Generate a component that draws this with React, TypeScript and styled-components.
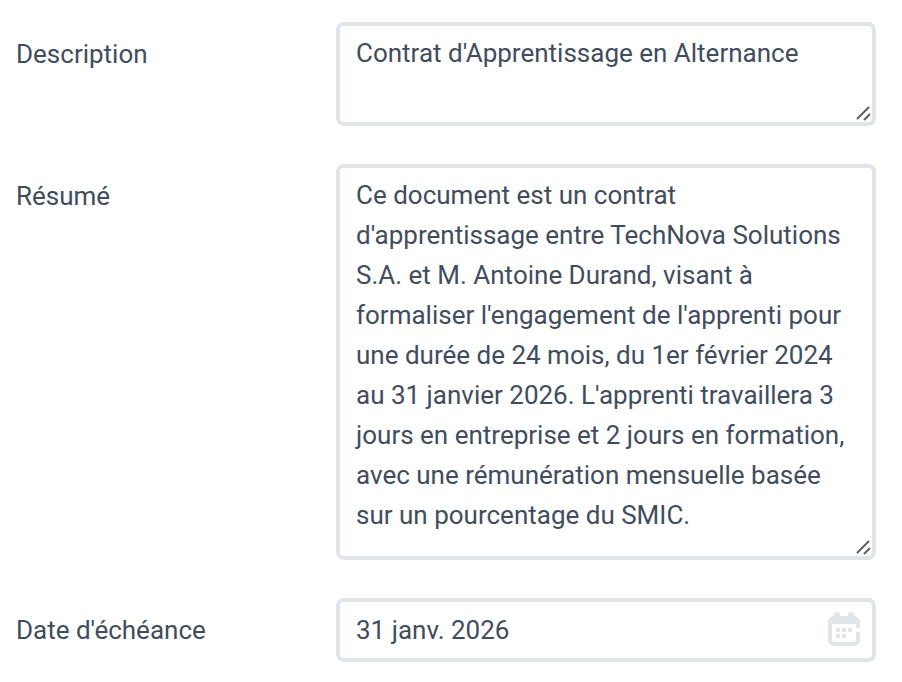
import React from "react";
import styled, { createGlobalStyle } from "styled-components";

const GlobalStyle = createGlobalStyle`
  * { box-sizing: border-box; }
  body {
    margin: 0;
    background: #ffffff;
    color: #414d5d;
    font-family: Roboto, sans-serif;
    font-size: 26px;
    line-height: 40px;
  }
`;

const Form = styled.form`
  display: flex;
  flex-direction: column;
  gap: 38px;
  padding: 22px 26px 20px 16px;
`;

const FieldRow = styled.div`
  display: grid;
  grid-template-columns: 300px minmax(0, 1fr);
  column-gap: 20px;
  align-items: start;
`;

const Label = styled.label`
  padding-top: 12px;
`;

const Frame = styled.div`
  position: relative;
  display: flex;
  border: 4px solid #e1e4e9;
  border-radius: 8px;
  background: #ffffff;
`;

const TextArea = styled.textarea<{ $height: number }>`
  flex: 1;
  min-width: 0;
  height: ${(p) => p.$height}px;
  padding: 7px 16px;
  border: 0;
  outline: 0;
  resize: none;
  overflow: hidden;
  background: transparent;
  color: inherit;
  font: inherit;
`;

const DateInput = styled.input`
  flex: 1;
  min-width: 0;
  height: 56px;
  padding: 0 16px;
  border: 0;
  outline: 0;
  background: transparent;
  color: inherit;
  font: inherit;
`;

const ResizeGrip = styled.svg`
  position: absolute;
  right: 0;
  bottom: 0;
  pointer-events: none;
`;

const CalendarButton = styled.button`
  display: flex;
  align-items: center;
  padding: 0 12px 0 0;
  border: 0;
  background: transparent;
  color: #e1e4e9;
  cursor: pointer;
`;

const Grip = () => (
  <ResizeGrip width="18" height="18" viewBox="0 0 18 18" fill="none" stroke="#606060" strokeWidth="2" strokeLinecap="round" aria-hidden="true">
    <path d="M3.5 14.5 14.5 3.5M10.5 15.5 15.5 10.5" />
  </ResizeGrip>
);

const CalendarIcon = () => (
  <svg width="32" height="36" viewBox="0 0 32 36" fill="currentColor" aria-hidden="true">
    <path d="M6 4V3a3 3 0 0 1 6 0v1h8V3a3 3 0 0 1 6 0v1a6 6 0 0 1 6 6v6h-4v-4H4v15a3 3 0 0 0 3 3h18a3 3 0 0 0 3-3v-7h4v8a6 6 0 0 1-6 6H6a6 6 0 0 1-6-6V10a6 6 0 0 1 6-6z" />
    <path d="M8 16h4v4H8zM14 16h4v4h-4zM20 16h4v4h-4zM8 22h4v4H8zM14 22h4v4h-4z" />
  </svg>
);

const summary =
  "Ce document est un contrat d'apprentissage entre TechNova Solutions S.A. et M. Antoine Durand, visant à formaliser l'engagement de l'apprenti pour une durée de 24 mois, du 1er février 2024 au 31 janvier 2026. L'apprenti travaillera 3 jours en entreprise et 2 jours en formation, avec une rémunération mensuelle basée sur un pourcentage du SMIC.";

export default function App() {
  return (
    <>
      <GlobalStyle />
      <Form>
        <FieldRow>
          <Label htmlFor="description">Description</Label>
          <Frame>
            <TextArea id="description" $height={96} defaultValue="Contrat d'Apprentissage en Alternance" />
            <Grip />
          </Frame>
        </FieldRow>
        <FieldRow>
          <Label htmlFor="summary">Résumé</Label>
          <Frame>
            <TextArea id="summary" $height={388} defaultValue={summary} />
            <Grip />
          </Frame>
        </FieldRow>
        <FieldRow>
          <Label htmlFor="due-date">Date d'échéance</Label>
          <Frame>
            <DateInput id="due-date" type="text" defaultValue="31 janv. 2026" />
            <CalendarButton type="button" aria-label="Ouvrir le calendrier">
              <CalendarIcon />
            </CalendarButton>
          </Frame>
        </FieldRow>
      </Form>
    </>
  );
}
